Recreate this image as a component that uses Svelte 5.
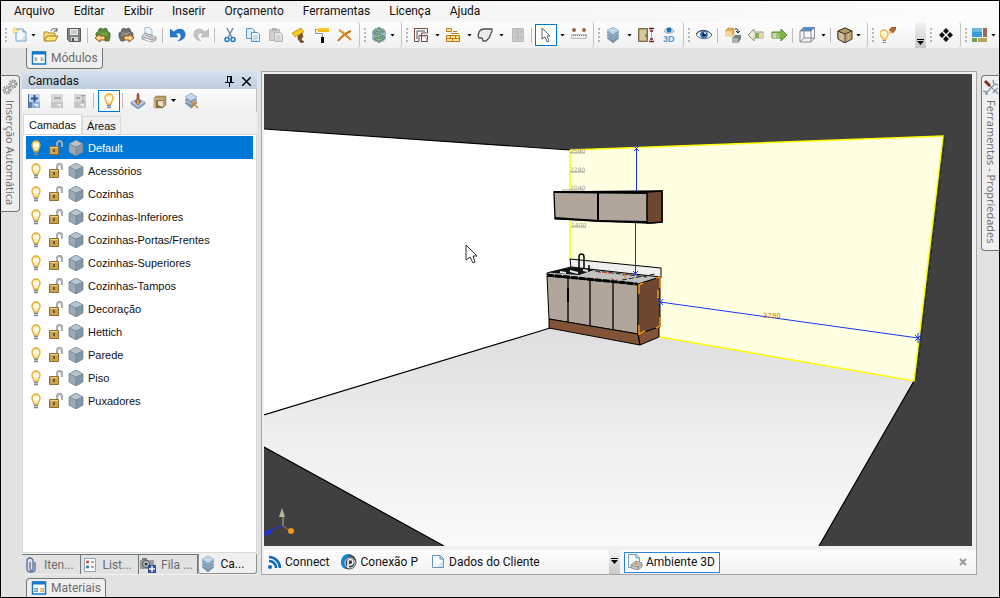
<script>
  const menus = ['Arquivo', 'Editar', 'Exibir', 'Inserir', 'Orçamento', 'Ferramentas', 'Licença', 'Ajuda'];

  // drop: 'near' keeps the arrow against the icon, 'far' leaves a gap
  const groups = [
    [
      { icon: 'new', label: 'Novo', drop: 'near' },
      { icon: 'open', label: 'Abrir' },
      { icon: 'save', label: 'Salvar' },
      { sep: true },
      { icon: 'import', label: 'Importar' },
      { icon: 'export', label: 'Exportar' },
      { icon: 'print', label: 'Imprimir' },
      { sep: true },
      { icon: 'undo', label: 'Desfazer' },
      { icon: 'redo', label: 'Refazer' },
      { sep: true },
      { icon: 'cut', label: 'Recortar' },
      { icon: 'copy', label: 'Copiar' },
      { icon: 'paste', label: 'Colar' },
      { icon: 'brush', label: 'Pincel' },
      { icon: 'roller', label: 'Rolo' },
      { icon: 'delete', label: 'Excluir' }
    ],
    [{ icon: 'money', label: 'Orçamento', drop: 'near' }],
    [
      { icon: 'plan', label: 'Ambiente', drop: 'far' },
      { icon: 'bricks', label: 'Paredes', drop: 'far' },
      { icon: 'shape', label: 'Forma', drop: 'far' },
      { icon: 'closet', label: 'Armário' },
      { sep: true },
      { icon: 'pointer', label: 'Selecionar', drop: 'far', active: true },
      { icon: 'ruler', label: 'Medir' }
    ],
    [
      { icon: 'layers', label: 'Camadas', drop: 'far' },
      { icon: 'height', label: 'Altura' },
      { icon: 'eye3d', label: 'Vista 3D' }
    ],
    [
      { icon: 'eye', label: 'Visualizar' },
      { sep: true },
      { icon: 'swap', label: 'Substituir' },
      { icon: 'prev', label: 'Anterior' },
      { icon: 'next', label: 'Próximo' },
      { sep: true },
      { icon: 'wire', label: 'Faces', drop: 'far' },
      { sep: true },
      { icon: 'woodbox', label: 'Textura', drop: 'near' }
    ],
    [{ icon: 'lightedit', label: 'Luzes' }],
    [{ icon: 'diamonds', label: 'Mover' }],
    [{ icon: 'tiles', label: 'Janelas', drop: 'near' }]
  ];

  const layers = [
    'Default', 'Acessórios', 'Cozinhas', 'Cozinhas-Inferiores', 'Cozinhas-Portas/Frentes',
    'Cozinhas-Superiores', 'Cozinhas-Tampos', 'Decoração', 'Hettich', 'Parede', 'Piso', 'Puxadores'
  ];

  const docks = [
    { icon: 'clip', label: 'Iten...' },
    { icon: 'list', label: 'List...' },
    { icon: 'queue', label: 'Fila ...' },
    { icon: 'layers', label: 'Ca...' }
  ];

  const views = [
    { icon: 'rss', label: 'Connect' },
    { icon: 'promob', label: 'Conexão P' },
    { icon: 'page', label: 'Dados do Cliente' }
  ];

  let selected = $state('Default');
  let tab = $state('Camadas');
  let dock = $state('Ca...');
</script>

{#snippet icon(name)}
  <svg class="icon" width="16" height="16" viewBox="0 0 16 16" aria-hidden="true">
    <use href="#i-{name}" />
    {#if name === 'eye3d'}<text class="three" x="2" y="15">3D</text>{/if}
  </svg>
{/snippet}

<svg class="defs" aria-hidden="true">
  <symbol id="i-new" viewBox="0 0 16 16"><path d="M4 2h7l3 3v9H4z" fill="#f3f8fd" stroke="#6f9fc9" /><path d="M11 2v3h3" fill="#cfe3f5" stroke="#6f9fc9" /><path d="M9 13l4-5v5z" fill="#cfe3f5" /><path d="M3 0v7M0 3.500h7M1 1l5 5M6 1L1 6" stroke="#eeb52e" stroke-width=".8" /><circle cx="3.500" cy="3.500" r="1.500" fill="#fff6a0" /></symbol>
  <symbol id="i-open" viewBox="0 0 16 16"><path d="M1 13V5h4l1 1h6v3" fill="#f7dc84" stroke="#b28a2a" /><path d="M1 14l3-5h11l-3 5z" fill="#fbe373" stroke="#a87b1c" /><path d="M8 4c1-3 4-3 6-1m0-2v3h-3" fill="none" stroke="#555" /></symbol>
  <symbol id="i-save" viewBox="0 0 16 16"><path d="M1.500 1.500h13v13h-11l-2-2z" fill="#7e8580" stroke="#565c58" /><path d="M4 2h8v6H4z" fill="#e8ece9" /><path d="M5 10h7v4H5z" fill="#d4d8d5" /><path d="M6 11h2v3H6z" fill="#4b514d" /><path d="M5 4h6M5 6h6" stroke="#a7ada9" /></symbol>
  <symbol id="i-import" viewBox="0 0 16 16"><path d="M3 5l1-3 2-1 1 1h2l1-1 2 1 1 3 2 1v4l-1 4h-4V9H1V6z" fill="#598c32" stroke="#3b5b28" stroke-width=".7" /><path d="M4 5c2 2 6 2 8 0M3 8h10" fill="none" stroke="#87b65a" /><path d="M0 11l5-4v2h5v4H5v2z" fill="#fbd58c" stroke="#9a5318" /></symbol>
  <symbol id="i-export" viewBox="0 0 16 16"><path d="M3 5l1-3 2-1 1 1h2l1-1 2 1 1 3 2 1v4H6v4H3l-2-4V6z" fill="#6c716f" stroke="#4a4f4e" stroke-width=".7" /><path d="M4 5c2 2 6 2 8 0M3 8h10" fill="none" stroke="#a2a7a5" /><path d="M16 11l-5-4v2H6v4h5v2z" fill="#fbd58c" stroke="#9a5318" /></symbol>
  <symbol id="i-print" viewBox="0 0 16 16"><path d="M4 7V0l5 1 2 2v5z" fill="#eef6fd" stroke="#9bb5cd" /><path d="M1 9l3-3 11 4v3l-4 2-10-3z" fill="#dcdce0" stroke="#8c8c92" stroke-width=".8" /><path d="M2 10l9 3 4-2M4 8l8 3" fill="none" stroke="#8a8a92" stroke-width=".8" /><path d="M4 12l6 2" stroke="#fff" /></symbol>
  <symbol id="i-undo" viewBox="0 0 16 16"><path d="M0 2v8h8L6 7c2-2 5-1 5 2 0 2-1 3-3 5 5-1 8-4 7-8-1-5-8-5-11-1z" fill="#2478d0" stroke="#145aa8" stroke-width=".5" /></symbol>
  <symbol id="i-redo" viewBox="0 0 16 16"><path d="M16 2v8H8l2-3C8 5 5 6 5 9c0 2 1 3 3 5-5-1-8-4-7-8 1-5 8-5 11-1z" fill="#c2c2c2" stroke="#aaa" stroke-width=".5" /></symbol>
  <symbol id="i-cut" viewBox="0 0 16 16"><path d="M5 1l5 10M11 1L6 11" stroke="#6d8aa6" stroke-width="1.500" /><circle cx="5" cy="12.500" r="2" fill="none" stroke="#2476bd" stroke-width="1.500" /><circle cx="11" cy="12.500" r="2" fill="none" stroke="#2476bd" stroke-width="1.500" /></symbol>
  <symbol id="i-copy" viewBox="0 0 16 16"><path d="M1.500 1.500h6l2 2v8h-8z" fill="#e2effa" stroke="#5896c8" /><path d="M6.500 5.500h6l2 2v7h-8z" fill="#f2f8fd" stroke="#5896c8" /><path d="M8 9h5M8 11h5M8 13h4" stroke="#9cc2e2" /></symbol>
  <symbol id="i-paste" viewBox="0 0 16 16"><path d="M1.500 2.500h10v11h-10z" fill="#cfcfcf" stroke="#bcbcbc" /><path d="M4 1h5v3H4z" fill="#b4b4b4" /><path d="M6.500 5.500h6l2 2v7h-8z" fill="#e4e4e4" stroke="#b4b4b4" /><path d="M8 9h4M8 11h5M8 13h5" stroke="#c4c4c4" /></symbol>
  <symbol id="i-brush" viewBox="0 0 16 16"><path d="M1 6l9-5 3 4-9 5z" fill="#f4c516" stroke="#c08d08" stroke-width=".7" /><path d="M3 8l8-4" stroke="#fbe04c" /><path d="M7 9l4-3 1 4-2 2 3 3-3 1-3-4z" fill="#7b5129" stroke="#7b5129" stroke-width=".7" /></symbol>
  <symbol id="i-roller" viewBox="0 0 16 16"><path d="M4 1h11v4H4z" fill="#f6b813" /><path d="M4 2h11" stroke="#ffdf57" /><path d="M4 2.500H1.500v4h7V10" fill="none" stroke="#959595" /><path d="M7 10h3v6H7z" fill="#111" /></symbol>
  <symbol id="i-delete" viewBox="0 0 16 16"><path d="M2 3c4 2 9 7 12 10M14 4C9 6 5 9 1 14" stroke="#c47817" stroke-width="2" fill="none" /><path d="M2 3c4 2 9 7 12 10" stroke="#f2b544" fill="none" /></symbol>
  <symbol id="i-money" viewBox="0 0 16 16"><path d="M4 1h8l3 3v8l-3 3H4l-3-3V4z" fill="#a3b5c6" /><path d="M12.500 5.500C12 4 10 3.500 8 3.500S3.500 4 3.500 6c0 3.500 9 1 9 4.500 0 1.500-2 2-4.500 2s-4-.5-4.500-2M8 0v16" fill="none" stroke="#4e7d66" stroke-width="2.600" /><path d="M12.500 5.500C12 4 10 3.500 8 3.500S3.500 4 3.500 6c0 3.500 9 1 9 4.500 0 1.500-2 2-4.500 2s-4-.5-4.500-2M8 0v16" fill="none" stroke="#9cc4a4" /></symbol>
  <symbol id="i-plan" viewBox="0 0 16 16"><path d="M1.500 14.500v-13h13V6h-6v2.500H6v6z" fill="#f7f7f7" stroke="#75513d" /><path d="M4 12V4h8M8.500 8.500h6v6h-6z" fill="none" stroke="#555" /><path d="M9 9c3 0 5 2 5 5" fill="none" stroke="#b59a86" /></symbol>
  <symbol id="i-bricks" viewBox="0 0 16 16"><path d="M1.500 1.500h5v3h-5zM1.500 8.500h4v3h-4zM5.500 8.500h5v3h-5zM10.500 8.500h4v3h-4zM1.500 11.500h6v3h-6zM7.500 11.500h7v3h-7z" fill="#ffe682" stroke="#b9791f" /><path d="M6 6.500h8M8 4.500h4" stroke="#b9791f" /></symbol>
  <symbol id="i-shape" viewBox="0 0 16 16"><path d="M1 9l1-4c1-2 3-3 5-3h8v2l-3 7-3 3H6l-1-3H2z" fill="#ececec" stroke="#515151" stroke-width="1.300" stroke-linejoin="round" /></symbol>
  <symbol id="i-closet" viewBox="0 0 16 16"><path d="M2.500 1.500h11v13h-11z" fill="#cbcbcb" stroke="#bababa" /><path d="M8 1v14M4 5h2M10 5h2M4 11h2M10 11h2" stroke="#b0b0b0" /></symbol>
  <symbol id="i-pointer" viewBox="0 0 16 16"><path d="M4 1v11l3-2 2 5 2-1-2-5h3z" fill="#fff" stroke="#626262" /></symbol>
  <symbol id="i-ruler" viewBox="0 0 16 16"><circle cx="3" cy="3" r="2" fill="#9e6655" /><circle cx="13" cy="3" r="2" fill="#9e6655" /><path d="M.5 7.500h15v4H.5z" fill="#f0f0f0" stroke="#bbb" /><path d="M2 8.500h13" stroke="#777" stroke-dasharray="1 1" /></symbol>
  <symbol id="i-layers" viewBox="0 0 16 16"><g stroke="#7d97af" stroke-width=".6"><path d="M2 11l6-3 6 3-6 5z" fill="#7690a9" /><path d="M2 9l6-3 6 3-6 4z" fill="#c3d6e5" /><path d="M2 8l6-3 6 3-6 4z" fill="#7f9ab3" /><path d="M2 6l6-3 6 3-6 4z" fill="#c3d6e5" /><path d="M2 5l6-3 6 3-6 4z" fill="#8aa5bd" /><path d="M2 3.500L8 0l6 3.500-6 4z" fill="#c3d9eb" /></g></symbol>
  <symbol id="i-height" viewBox="0 0 16 16"><path d="M.5 1.500h9v13h-9z" fill="#bba477" stroke="#7c6b45" /><path d="M2 3h6v10H2z" fill="#d9c79d" /><path d="M8 7v3" stroke="#55482b" /><path d="M13.500 2v12" stroke="#d2a34a" /><path d="M11 1.500h5M11 14.500h5M12 4h3M12 12h3" stroke="#8c1625" stroke-width="1.500" /></symbol>
  <symbol id="i-eye3d" viewBox="0 0 16 16"><path d="M3 4c2-4 8-4 10 0-2 3-8 3-10 0z" fill="#dbe8ef" stroke="#9aaab5" /><circle cx="8" cy="3" r="2.500" fill="#1576af" /></symbol>
  <symbol id="i-eye" viewBox="0 0 16 16"><path d="M0 8c3-6 12-6 16 0-3 5-12 5-16 0z" fill="#e9edf2" stroke="#6b717b" /><circle cx="8" cy="7.500" r="3.800" fill="#3177ba" /><circle cx="8" cy="7.500" r="2" fill="#10243f" /><circle cx="9" cy="6" r="1" fill="#fff" /><path d="M0 7c3-5 12-5 16 1" fill="none" stroke="#474b55" /></symbol>
  <symbol id="i-swap" viewBox="0 0 16 16"><path d="M0 4l3-3h6v6l-2 2H0z" fill="#d9a951" stroke="#c7943b" stroke-width=".5" /><path d="M0 4h7v5H0z" fill="#f5d696" /><path d="M7 11l3-3h6v4l-3 4H7z" fill="#74837e" /><path d="M7 11h6v5H7z" fill="#a7b3ad" /><path d="M10 2c3 0 3 0 3 3m-2-1l2 2 2-2" fill="none" stroke="#222" /></symbol>
  <symbol id="i-prev" viewBox="0 0 16 16"><path d="M0 8l6-6v3h9v6H6v3z" fill="#e9e9d7" stroke="#8f9b7d" /><path d="M7 6h4v5H7z" fill="#88ad5c" /><path d="M11 6h4v5h-4z" fill="#e1d6ac" /></symbol>
  <symbol id="i-next" viewBox="0 0 16 16"><path d="M16 8l-6-6v3H1v6h9v3z" fill="#7fb64a" stroke="#5b8a37" /><path d="M1.500 6h4v5h-4z" fill="#d5d6b9" /><path d="M6 6h3v5H6z" fill="#9cc670" /></symbol>
  <symbol id="i-wire" viewBox="0 0 16 16"><path d="M1 4l4-4h11l-4 4z" fill="#4b8bd2" /><path d="M1 4h11v11H1zM5 0v11M15.500 0v11l-4 4M1 15l4-4h11M1 4l4-4h11l-4 4" fill="none" stroke="#888b94" /></symbol>
  <symbol id="i-woodbox" viewBox="0 0 16 16"><path d="M1 4l7-3 7 3v8l-7 4-7-4z" fill="#cdb17f" stroke="#40382c" /><path d="M1 4l7 3v9l-7-4z" fill="#e4cea6" stroke="#40382c" /><path d="M1 4l7-3 7 3-7 3z" fill="#b69a6c" stroke="#40382c" /><path d="M3 6v7M6 7v7M10 7v7M13 6v7" stroke="#8c744e" stroke-width=".5" /></symbol>
  <symbol id="i-bulb" viewBox="0 0 16 16"><path d="M6 11c0-2-2-3-2-6a4 4 0 018 0c0 3-2 4-2 6z" fill="#fffbe8" stroke="#e3a92c" stroke-width="1.300" /><path d="M5.500 4a3 3 0 015 0" fill="none" stroke="#fbe07c" /><path d="M7 11V7M9 11V7" stroke="#f0d388" stroke-width=".7" /><path d="M6 12.500h4M6 14.500h4" stroke="#7f8798" stroke-width="1.500" /></symbol>
  <symbol id="i-lightedit" viewBox="0 0 16 16"><path d="M3 12c0-2-3-2-3-5a4 4 0 018 0c0 3-2 3-2 5z" fill="#fff6cf" stroke="#e8b750" stroke-width="1.300" /><path d="M3 13.500h3M3 15.500h3" stroke="#898c91" /><path d="M9 3l3-3h4v2l-3 4z" fill="#b9692f" stroke="#6a321c" stroke-width=".5" /><path d="M9 3l4 3-4 1z" fill="#f0c070" /></symbol>
  <symbol id="i-diamonds" viewBox="0 0 16 16"><path d="M8 1l3 3-3 3-3-3zM8 9l3 3-3 3-3-3zM4 5l3 3-3 3-3-3zM12 5l3 3-3 3-3-3z" fill="#101010" /></symbol>
  <symbol id="i-tiles" viewBox="0 0 16 16"><path d="M0 1h10v9H0z" fill="#3999d4" /><path d="M0 1h10v4H0z" fill="#68b7e4" /><path d="M11 1h4v9h-4z" fill="#946b5d" /><path d="M0 11h5v4H0z" fill="#6da256" /><path d="M6 11h9v4H6z" fill="#b7a65a" /></symbol>
  <symbol id="i-modules" viewBox="0 0 16 16"><path d="M1.500 2h13v12h-13z" fill="#fff" stroke="#1677cb" stroke-width="1.500" /><path d="M1 3h14" stroke="#1677cb" stroke-width="3" /><path d="M4.500 7v4M10.500 7v4" stroke="#ba9d62" stroke-width="1.500" /><path d="M6 8v3M12 8v3" stroke="#8ea4b7" /></symbol>
  <symbol id="i-materials" viewBox="0 0 16 16"><path d="M1.500 2h13v12h-13z" fill="#fff" stroke="#1677cb" stroke-width="1.500" /><path d="M1 3h14" stroke="#1677cb" stroke-width="3" /><path d="M3 8h4v4H3z" fill="#849cae" /><path d="M9 8h4v4H9z" fill="#e0b471" /><path d="M3 10h3M9 10h3" stroke="#eee" /></symbol>
  <symbol id="i-gears" viewBox="0 0 16 16"><g fill="none" stroke="#8b8b8b"><circle cx="11" cy="5" r="3.500" stroke-width="2" stroke-dasharray="1.500 1" /><circle cx="11" cy="5" r="2" /><circle cx="5" cy="11" r="3.500" stroke-width="2" stroke-dasharray="1.500 1" /><circle cx="5" cy="11" r="2" /></g></symbol>
  <symbol id="i-toolkit" viewBox="0 0 16 16"><path d="M2 15l9-9M0 12l4 1v3M10 1l1 4 4 1M15 9l-3 2-2 3M12 11l3 4" stroke="#8a9cae" stroke-width="1.500" fill="none" /><path d="M2 2l5 5" stroke="#73351f" stroke-width="3" /><path d="M7 7l5 5" stroke="#6c7d90" /></symbol>
  <symbol id="i-addlayer" viewBox="0 0 16 16"><path d="M2 1h12v14H2z" fill="#c5d5e7" /><path d="M6 9h8v6H6z" fill="#8fb0d4" /><path d="M2 9h4v6H2z" fill="#5c83b4" /><path d="M2.500 1v14" stroke="#496e9d" /><path d="M8.500 2v7M5 5.500h7" stroke="#29559a" stroke-width="2" /><path d="M7 11l5 3v-3z" fill="#e8f1fa" /></symbol>
  <symbol id="i-dellayer" viewBox="0 0 16 16"><path d="M2 1h12v14H2z" fill="#d8d8d8" /><path d="M2 9h12v6H2z" fill="#c6c6c6" /><path d="M5 5h7" stroke="#aaa" stroke-width="2" /><path d="M7 11l5 3v-3z" fill="#eee" /></symbol>
  <symbol id="i-renlayer" viewBox="0 0 16 16"><path d="M2 1h12v14H2z" fill="#d8d8d8" /><path d="M2 9h12v6H2z" fill="#c6c6c6" /><path d="M4 5h4" stroke="#aaa" stroke-width="2" /><path d="M9 2.500h4M11 3v5M9 8.500h4" stroke="#a1a1a1" /><path d="M7 11l5 3v-3z" fill="#eee" /></symbol>
  <symbol id="i-apply" viewBox="0 0 16 16"><path d="M1 9l7-3 7 3v2l-7 5-7-5z" fill="#8ba1b8" stroke="#71879d" stroke-width=".7" /><path d="M1 9l7-3 7 3-7 5z" fill="#b4cbe3" /><path d="M8 12L5 8h2V2l1-2 1 2v6h2z" fill="#c26a33" stroke="#7a2d20" stroke-width=".7" /><path d="M8 7v4" stroke="#f7d154" /></symbol>
  <symbol id="i-box" viewBox="0 0 16 16"><path d="M2 5l2-2h10v9l-3 3H2z" fill="#b59666" stroke="#8c744e" stroke-width=".5" /><path d="M2 5h9v10H2z" fill="#cbae80" /><path d="M4 7h7v8H4z" fill="#8a704a" /><path d="M6 8h5v6l-5-2z" fill="#ecdcc0" /></symbol>
  <symbol id="i-layercut" viewBox="0 0 16 16"><g stroke="#7d97af" stroke-width=".6"><path d="M2 10l6-3 6 3-6 5z" fill="#7690a9" /><path d="M2 8l6-3 6 3-6 4z" fill="#c3d6e5" /><path d="M2 6.500l6-3 6 3-6 4z" fill="#8aa5bd" /><path d="M2 4l6-4 6 4-6 4z" fill="#c3d9eb" /></g><path d="M8 8l7 7M14 9l-6 6" stroke="#d08a36" stroke-width="1.500" /></symbol>
  <symbol id="i-lock" viewBox="0 0 16 16"><path d="M9 8V4c0-4 5-4 5 0v3" fill="none" stroke="#888b90" stroke-width="2" /><path d="M9 8V4c0-4 5-4 5 0v3" fill="none" stroke="#dedede" stroke-width=".8" /><path d="M1.500 6.500h9v8h-9z" fill="#c9a453" stroke="#8c6b2e" /><path d="M2 7.500h8" stroke="#ecd18c" /><path d="M6 9v3" stroke="#5a401b" stroke-width="1.500" /></symbol>
  <symbol id="i-cube" viewBox="0 0 16 16"><path d="M1 4l7-4 7 4v8l-7 4-7-4z" fill="#8596a4" /><path d="M1 4l7 3v9l-7-4z" fill="#9baab6" /><path d="M1 4l7-4 7 4-7 3z" fill="#b9c5ce" /><path d="M1 4l7-4 7 4v8l-7 4-7-4zM1 4l7 3 7-3M8 7v9" fill="none" stroke="#6b7e8c" stroke-width=".7" /></symbol>
  <symbol id="i-clip" viewBox="0 0 16 16"><path d="M7 5v7c0 2 3 2 3 0V4c0-4-6-4-6 0v8c0 4 8 4 8 0V5" fill="none" stroke="#596c9b" stroke-width="1.300" /></symbol>
  <symbol id="i-list" viewBox="0 0 16 16"><path d="M2.500 1.500h11v13h-11z" fill="#fff" stroke="#8da4bb" /><path d="M4 5h3" stroke="#b65b36" stroke-width="2.500" /><path d="M4 10h3" stroke="#45729f" stroke-width="2.500" /><path d="M9 5h3M9 10h3" stroke="#4b5966" /></symbol>
  <symbol id="i-queue" viewBox="0 0 16 16"><path d="M0 3h14v9H0z" fill="#9a9c9c" /><path d="M2 1h5v2H2z" fill="#7a7c7d" /><circle cx="6" cy="7" r="3.500" fill="#c5d1d5" stroke="#454545" /><circle cx="6" cy="7" r="1.500" fill="#292f3c" /><path d="M8 8h8v8H8z" fill="#315290" /><path d="M12 9v6M9 12h6" stroke="#fff" stroke-width="1.500" /></symbol>
  <symbol id="i-rss" viewBox="0 0 16 16"><circle cx="4" cy="13" r="2" fill="#126cbd" /><path d="M3 7c4 0 7 3 7 7M3 3c6 0 11 5 11 11" fill="none" stroke="#126cbd" stroke-width="2.500" /></symbol>
  <symbol id="i-promob" viewBox="0 0 16 16"><circle cx="8" cy="8" r="7.500" fill="#474b52" /><path d="M8 0a8 8 0 00-4 15V2z" fill="#1287d0" /><path d="M10 0a8 8 0 00-7 13L5 5z" fill="#1287d0" /><circle cx="9" cy="9" r="5" fill="#3c4048" stroke="#e8e8e8" /><path d="M7 14V7c0-2 5-2 5 1s-2 3-4 3" fill="none" stroke="#fff" stroke-width="1.500" /></symbol>
  <symbol id="i-page" viewBox="0 0 16 16"><path d="M2.500 1.500h8l3 3v9h-11z" fill="#f4faff" stroke="#6791b7" /><path d="M10 2v3h3" fill="#bed9ef" stroke="#6791b7" /><path d="M6 13l7-6v6z" fill="#d6e8f6" /></symbol>
  <symbol id="i-scene" viewBox="0 0 16 16"><path d="M1.500.5h8l3 3v10h-11z" fill="#f3f8fc" stroke="#7899b5" /><path d="M9 1v3h3" fill="#bdd5e7" stroke="#7899b5" /><path d="M4 11l5-4 6 2v4l-4 3-7-2z" fill="#c4c7ca" stroke="#84888e" stroke-width=".8" /><path d="M4 11l7 2 4-3M11 12v4" fill="none" stroke="#84888e" stroke-width=".8" /><path d="M7 9l4 1" stroke="#c5a65a" stroke-width="2" /></symbol>
</svg>

<div class="window">
  <nav class="menubar">
    {#each menus as menu}
      <button>{menu}</button>
    {/each}
  </nav>

  <div class="toolbar">
    {#each groups as group, g}
      <div class="group" class:grow={g === 5}>
        <i class="grip"></i>
        {#each group as item}
          {#if item.sep}
            <i class="sep"></i>
          {:else}
            <button class="tool {item.drop ?? ''}" class:active={item.active} aria-label={item.label}>
              <span class="face">{@render icon(item.icon)}</span>
              {#if item.drop}<i class="caret"></i>{/if}
            </button>
          {/if}
        {/each}
        {#if g === 5}
          <button class="overflow" aria-label="Mais botões"><i class="caret"></i></button>
        {/if}
      </div>
    {/each}
  </div>

  <div class="edge top">
    <button class="edge-tab">{@render icon('modules')}Módulos</button>
  </div>

  <main>
    <aside class="rail left">
      <button>{@render icon('gears')}<span>Inserção Automática</span></button>
    </aside>

    <section class="panel">
      <header>
        <h2>Camadas</h2>
        <button aria-label="Fixar">
          <svg width="9" height="11" viewBox="0 0 9 11"><path d="M2 .5h5M2.500 0v6M5.500 0v6M6.500 0v6M0 6.500h9M4.500 7v4" fill="none" stroke="#000" /></svg>
        </button>
        <button aria-label="Fechar">
          <svg width="9" height="9" viewBox="0 0 9 9"><path d="M0 0l9 9M9 0L0 9" stroke="#000" stroke-width="1.500" /></svg>
        </button>
      </header>

      <div class="panel-tools">
        <button class="tool" aria-label="Adicionar camada">{@render icon('addlayer')}</button>
        <button class="tool" aria-label="Remover camada">{@render icon('dellayer')}</button>
        <button class="tool" aria-label="Renomear camada">{@render icon('renlayer')}</button>
        <i class="sep"></i>
        <button class="tool active" aria-label="Exibir camada"><span class="face">{@render icon('bulb')}</span></button>
        <i class="sep"></i>
        <button class="tool" aria-label="Aplicar camada">{@render icon('apply')}</button>
        <button class="tool near" aria-label="Caixa"><span class="face">{@render icon('box')}</span><i class="caret"></i></button>
        <button class="tool" aria-label="Limpar camadas">{@render icon('layercut')}</button>
      </div>

      <div class="tabs" role="tablist">
        {#each ['Camadas', 'Áreas'] as name}
          <button role="tab" aria-selected={tab === name} class:on={tab === name} onclick={() => (tab = name)}>{name}</button>
        {/each}
      </div>

      <ul class="layers">
        {#each layers as layer}
          <li>
            <button class:selected={selected === layer} onclick={() => (selected = layer)}>
              {@render icon('bulb')}{@render icon('lock')}{@render icon('cube')}
              <span>{layer}</span>
            </button>
          </li>
        {/each}
      </ul>

      <div class="docks">
        {#each docks as d}
          <button class:on={dock === d.label} onclick={() => (dock = d.label)}>{@render icon(d.icon)}{d.label}</button>
        {/each}
      </div>
    </section>

    <section class="view">
      <svg class="scene" viewBox="264 74 708 472" preserveAspectRatio="xMidYMid slice" role="img" aria-label="Ambiente 3D">
        <defs>
          <linearGradient id="floor" x1="0" y1="0" x2="0" y2="1">
            <stop offset="0" stop-color="#dedede" />
            <stop offset=".5" stop-color="#eeeeee" />
            <stop offset="1" stop-color="#fafafa" />
          </linearGradient>
        </defs>
        <path d="M264 74h708v472H264z" fill="#404040" />

        <!-- room -->
        <path d="M264 129l306 21v175l-20 3-286 88z" fill="#fff" />
        <path d="M570 150l373-14-29 245-254-44-90-10z" fill="#ffffe1" />
        <path d="M264 415l286-87 110 9 254 44-95 165H444l-180-99z" fill="url(#floor)" />
        <path d="M264 129l306 21M264 415l286-87M264 447l180 99M819 546l95-165" fill="none" stroke="#000" stroke-width="1.200" />
        <path d="M570 150l373-14-29 245-254-44M570 150v110" fill="none" stroke="#ff0" stroke-width="1.500" />
        <path d="M945 138l-29 242" stroke="#222" stroke-dasharray="5 3" />

        <!-- height marks -->
        <g class="marks">
          <text x="570" y="153">2590</text>
          <text x="570" y="172">2280</text>
          <text x="570" y="190">2040</text>
          <text x="571" y="227">1400</text>
        </g>
        <path d="M570 153h15M570 172h15M562 190h22M571 227h15" stroke="#aaa898" />
        <path d="M636.500 148v44M635.500 222v52" stroke="#1b36ee" />

        <!-- wall cabinet -->
        <path d="M554 192l108-1v31l-14 1-93-4z" fill="#b0a69c" stroke="#000" stroke-width="1.300" />
        <path d="M647 192l15-1v31l-10 1h-5z" fill="#6d4731" stroke="#000" stroke-width="1.500" />
        <path d="M555 218l43 3 49 1" fill="none" stroke="#000" stroke-width="2" />
        <path d="M554 192l93 1M598 192v29" fill="none" stroke="#000" stroke-width="2" />

        <!-- base cabinet -->
        <path d="M570 259l91 9v10l-90-10z" fill="#efefed" stroke="#000" />
        <path d="M635.500 262v12" stroke="#1b36ee" />
        <path d="M547 273l24-6 90 10-22 7-92-9z" fill="#c1c1bf" stroke="#000" />
        <path d="M547 276l91 8v50l-89-15z" fill="#b0a69c" stroke="#000" />
        <path d="M638 284l22-7v50l-22 7z" fill="#6d4731" stroke="#000" />
        <path d="M549 319l89 15 21-7v10l-19 8-91-17z" fill="#835338" stroke="#000" />
        <path d="M638 334l2 11M568 276v46M590 279v46M613 281v49" stroke="#000" stroke-width="1.300" />
        <path d="M568 288v14" stroke="#000" stroke-width="2" />
        <path d="M547 275l90 9" stroke="#000" stroke-width="3" stroke-dasharray="7 1" />
        <path d="M549 272l24-5 21 3-15 5-26-2z" fill="#111" />
        <path d="M570 271l8 2M560 272l6 1M583 270l5 1" stroke="#d4e8ed" stroke-width="2" />
        <path d="M579 268v-11c0-4 5-4 5 0M584 257v12M589 265v6" fill="none" stroke="#000" stroke-width="1.500" />
        <path d="M595 271l52 6M622 280l33-6" fill="none" stroke="#222" stroke-dasharray="5 2" />
        <path d="M598 272l13 1M622 275l9-1M611 279l6 1" stroke="#b6375c" stroke-dasharray="3 2" />
        <path d="M625 273v5M604 273h4" stroke="#e68617" />
        <path d="M639 294v-9l4-2M656 278l4-1v11M660 317v9l-4 2M645 331l-6 3v-9M658 298v-8" fill="none" stroke="#f0941a" stroke-width="1.500" />

        <!-- dimensions -->
        <g stroke="#1b36ee" fill="none">
          <path d="M660 302l258 36" />
          <path d="M658 299l5 6M663 299l-5 6M915 335l6 6M921 335l-6 6M634 146l5 5M639 146l-5 5M633 271l5 5M638 271l-5 5M918 333v10" />
        </g>
        <text class="measure" x="763" y="318">3280</text>

        <!-- axes -->
        <path d="M283 526v-12" stroke="#b9b79b" />
        <path d="M282 508l3 9h-6z" fill="#b9b79b" />
        <path d="M283 526l-18 6" stroke="#1b36ee" />
        <path d="M264 534l6-5 2 4-7 3z" fill="#1b36ee" />
        <path d="M283 526l6 4" stroke="#b96b40" />
        <circle cx="291" cy="531" r="3" fill="#e99b17" />

        <path d="M466 245v15l4-3 3 6 2-1-2-6h4z" fill="#fff" stroke="#303030" />
      </svg>

      <div class="viewbar">
        <div class="viewlist">
          {#each views as v}
            <button>{@render icon(v.icon)}{v.label}</button>
          {/each}
          <button class="overflow" aria-label="Mais vistas"><i class="caret"></i></button>
        </div>
        <div class="viewlist current">
          <button class="on">{@render icon('scene')}Ambiente 3D</button>
          <button class="close" aria-label="Fechar vista">
            <svg width="8" height="8" viewBox="0 0 8 8"><path d="M1 1l6 6M7 1L1 7" stroke="#999" stroke-width="2" /></svg>
          </button>
        </div>
      </div>
    </section>

    <aside class="rail right">
      <button>{@render icon('toolkit')}<span>Ferramentas - Propriedades</span></button>
    </aside>
  </main>

  <div class="edge bottom">
    <button class="edge-tab">{@render icon('materials')}Materiais</button>
  </div>
</div>

<style>
  :global(body) { background: #e2e2e2; }
  * { box-sizing: border-box; }
  button { font: inherit; color: inherit; background: none; border: 0; padding: 0; margin: 0; white-space: nowrap; }
  .defs { position: absolute; width: 0; height: 0; }
  .icon { flex: none; display: block; overflow: visible; }
  .three { font: 700 9px "Liberation Sans", sans-serif; fill: #4d9bd4; }

  .window {
    display: flex; flex-direction: column; height: 100vh; overflow: hidden;
    border: 1px solid #000; background: #e2e2e2; color: #111;
    font: 12px/16px Roboto, "Noto Sans", sans-serif;
  }

  .menubar { display: flex; align-items: flex-start; gap: 19px; padding: 2px 13px; height: 21px; background: linear-gradient(90deg, #f0f0f0, #fcfcfc); }

  .toolbar { display: flex; height: 26px; background: #f4f4f4; }
  .group {
    display: flex; align-items: center; padding-right: 3px;
    background: linear-gradient(#fdfdfd, #f1f1f1); border-right: 1px solid #c4c4c4; border-radius: 0 3px 3px 0;
  }
  .group:last-child { padding-right: 0; border-right: 0; }
  .grow { flex: 1; padding-right: 0; border-right: 0; }
  .grip { width: 2px; height: 14px; margin: 0 2px 0 4px; background: repeating-linear-gradient(#b8b8b8 0 2px, transparent 2px 4px); }
  .sep { width: 1px; height: 15px; margin: 0 3px 0 2px; background: #bdbdbd; }
  .tool { display: flex; align-items: center; justify-content: center; width: 23px; height: 24px; }
  .face { display: flex; align-items: center; justify-content: center; width: 22px; height: 22px; }
  .near, .far { justify-content: flex-start; }
  .near { width: 30px; }
  .far { width: 32px; gap: 3px; }
  .active .face { border: 1px solid #0078d7; background: #fff; }
  .caret { flex: none; width: 5px; height: 3px; background: #000; clip-path: polygon(0 0, 100% 0, 50% 100%); }
  .overflow { display: flex; align-items: flex-end; justify-content: center; align-self: stretch; width: 11px; margin-left: auto; padding-bottom: 3px; background: linear-gradient(#f4f4f4, #c8c8c8); }
  .overflow .caret { width: 7px; height: 6px; clip-path: polygon(0 0, 100% 0, 100% 1px, 0 1px, 0 2px, 100% 2px, 50% 100%, 0 2px); }

  .edge { display: flex; padding: 0 25px; color: #6c6c6c; }
  .edge-tab { display: flex; align-items: center; gap: 4px; padding: 0 4px; border: 1px solid #6f7a76; background: #efefef; }
  .top { height: 23px; align-items: flex-start; }
  .top .edge-tab { height: 21px; border-top: 0; border-radius: 0 0 4px 4px; }
  .bottom { height: 22px; align-items: flex-end; }
  .bottom .edge-tab { height: 19px; border-bottom: 0; border-radius: 4px 4px 0 0; }

  main { flex: 1; display: flex; min-height: 0; }
  .rail { flex: none; width: 21px; padding-top: 4px; color: #6c6c6c; font: 11px/14px "Open Sans", "Noto Sans", sans-serif; }
  .rail button { display: flex; flex-direction: column; align-items: center; gap: 5px; width: 19px; padding: 3px 0 6px; border: 1px solid #6f7a76; background: #efefef; }
  .rail span { writing-mode: vertical-rl; }
  .left button { border-left: 0; border-radius: 0 4px 4px 0; }
  .right { margin-left: 4px; width: 18px; }
  .right button { width: 18px; border-right: 0; border-radius: 4px 0 0 4px; }

  .panel { display: flex; flex-direction: column; width: 235px; padding-bottom: 1px; background: #f0f0f0; }
  .panel header { display: flex; align-items: center; gap: 8px; height: 18px; padding: 2px 6px 0; background: linear-gradient(#d5e2ef, #bfcddd); }
  .panel h2 { flex: 1; margin: 0; font: inherit; }
  .panel header svg { display: block; }
  .panel-tools { display: flex; align-items: center; height: 23px; background: linear-gradient(#fdfdfd, #f0f0f0); border-right: 1px solid #c4c4c4; }
  .tabs { display: flex; align-items: flex-end; height: 22px; padding-left: 1px; font: 11px/16px "Liberation Sans", sans-serif; }
  .tabs button { height: 18px; padding: 0 4px; background: #f0f0f0; border: 1px solid #d9d9d9; border-bottom: 0; }
  .tabs .on { height: 20px; padding: 0 5px; background: #fff; }
  .layers { flex: 1; min-height: 0; margin: 0; padding: 1px 3px 0; list-style: none; overflow: hidden; background: #fff; border: 1px solid #d9d9d9; font: 11px/16px "Liberation Sans", sans-serif; }
  .layers button { display: flex; align-items: center; gap: 4px; width: 100%; height: 23px; padding-left: 2px; text-align: left; }
  .layers .selected { background: #0078d7; color: #fff; }
  .docks { display: flex; height: 20px; margin-top: 1px; background: #e2e2e2; border-top: 1px solid #6f7a76; color: #6c6c6c; }
  .docks button { flex: 1; display: flex; align-items: center; gap: 5px; padding-left: 1px; border-right: 1px solid #6f7a76; }
  .docks .on { margin-top: -1px; border: 1px solid #8b9490; border-top: 0; border-radius: 0 0 3px 3px; background: #f0f0f0; color: #111; }

  .view { flex: 1; display: flex; flex-direction: column; min-width: 0; margin-left: 4px; padding: 2px 0 0 2px; border: 1px solid #a5a5a5; background: #f0f0f0; }
  .scene { flex: 1; display: block; min-height: 0; margin-right: 4px; }
  .marks { font: 6px "DejaVu Sans", sans-serif; fill: #9c9a8b; }
  .measure { font: 7px "DejaVu Sans", sans-serif; fill: #c97913; }
  .viewbar { display: flex; height: 24px; margin-top: 4px; }
  .viewlist { display: flex; align-items: center; flex: none; width: 50%; gap: 12px; padding-left: 2px; background: linear-gradient(#fdfdfd, #f2f2f2); border-radius: 3px; }
  .viewlist button { display: flex; align-items: center; gap: 3px; }
  .viewlist .overflow { padding-bottom: 2px; }
  .current { padding: 0 9px 0 4px; justify-content: space-between; }
  .viewlist .on { height: 21px; padding: 0 4px 0 2px; border: 1px solid #2a86dc; background: #fff; }
</style>
